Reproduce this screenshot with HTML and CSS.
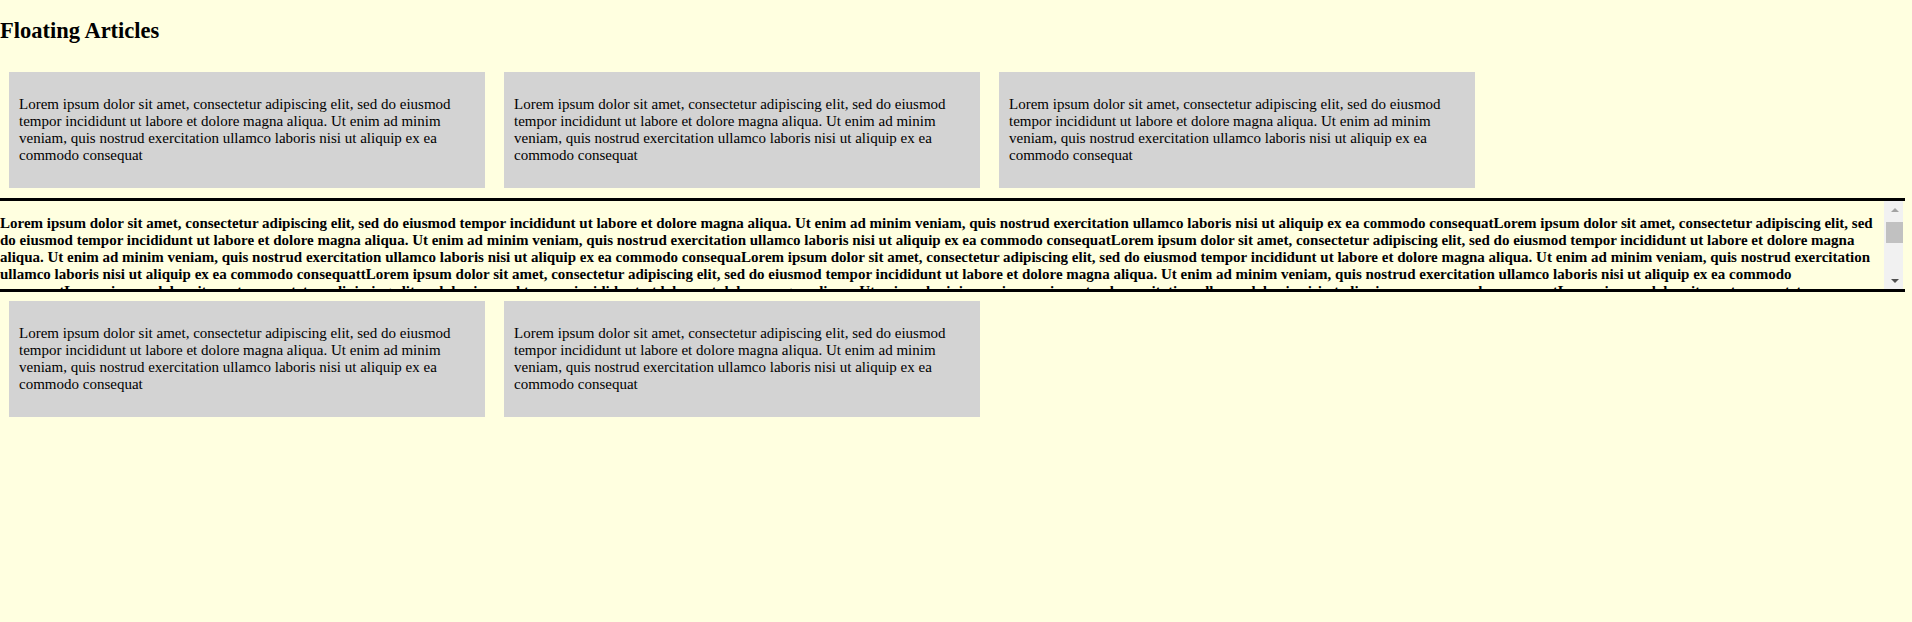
FILE: index.html
```html
<!DOCTYPE html>
<html lang="en">
<head>
<meta charset="utf-8">
<title>Floating Articles</title>
<link rel="stylesheet" href="styles.css">
</head>
<body>
<h2 class="title">Floating Articles</h2>
<div class="row">
  <article class="card"><p>Lorem ipsum dolor sit amet, consectetur adipiscing elit, sed do eiusmod tempor incididunt ut labore et dolore magna aliqua. Ut enim ad minim veniam, quis nostrud exercitation ullamco laboris nisi ut aliquip ex ea commodo consequat</p></article>
  <article class="card"><p>Lorem ipsum dolor sit amet, consectetur adipiscing elit, sed do eiusmod tempor incididunt ut labore et dolore magna aliqua. Ut enim ad minim veniam, quis nostrud exercitation ullamco laboris nisi ut aliquip ex ea commodo consequat</p></article>
  <article class="card"><p>Lorem ipsum dolor sit amet, consectetur adipiscing elit, sed do eiusmod tempor incididunt ut labore et dolore magna aliqua. Ut enim ad minim veniam, quis nostrud exercitation ullamco laboris nisi ut aliquip ex ea commodo consequat</p></article>
</div>
<section class="scroller">
  <div class="scroller-body">
    <p class="scroller-text">Lorem ipsum dolor sit amet, consectetur adipiscing elit, sed do eiusmod tempor incididunt ut labore et dolore magna aliqua. Ut enim ad minim veniam, quis nostrud exercitation ullamco laboris nisi ut aliquip ex ea commodo consequatLorem ipsum dolor sit amet, consectetur adipiscing elit, sed do eiusmod tempor incididunt ut labore et dolore magna aliqua. Ut enim ad minim veniam, quis nostrud exercitation ullamco laboris nisi ut aliquip ex ea commodo consequatLorem ipsum dolor sit amet, consectetur adipiscing elit, sed do eiusmod tempor incididunt ut labore et dolore magna aliqua. Ut enim ad minim veniam, quis nostrud exercitation ullamco laboris nisi ut aliquip ex ea commodo consequaLorem ipsum dolor sit amet, consectetur adipiscing elit, sed do eiusmod tempor incididunt ut labore et dolore magna aliqua. Ut enim ad minim veniam, quis nostrud exercitation ullamco laboris nisi ut aliquip ex ea commodo consequattLorem ipsum dolor sit amet, consectetur adipiscing elit, sed do eiusmod tempor incididunt ut labore et dolore magna aliqua. Ut enim ad minim veniam, quis nostrud exercitation ullamco laboris nisi ut aliquip ex ea commodo consequatLorem ipsum dolor sit amet, consectetur adipiscing elit, sed do eiusmod tempor incididunt ut labore et dolore magna aliqua. Ut enim ad minim veniam, quis nostrud exercitation ullamco laboris nisi ut aliquip ex ea commodo consequatLorem ipsum dolor sit amet, consectetur adipiscing elit, sed do eiusmod tempor incididunt ut labore et dolore magna aliqua. Ut enim ad minim veniam, quis nostrud exercitation ullamco laboris nisi ut aliquip ex ea commodo consequatLorem ipsum dolor sit amet, consectetur adipiscing elit, sed do eiusmod tempor incididunt ut labore et dolore magna aliqua. Ut enim ad minim veniam, quis nostrud exercitation ullamco laboris nisi ut aliquip ex ea commodo consequat</p>
  </div>
  <div class="scrollbar" aria-hidden="true">
    <div class="sb-btn"><span class="arrow-up"></span></div>
    <div class="sb-track"><div class="sb-thumb"></div></div>
    <div class="sb-btn"><span class="arrow-down"></span></div>
  </div>
</section>
<div class="row">
  <article class="card"><p>Lorem ipsum dolor sit amet, consectetur adipiscing elit, sed do eiusmod tempor incididunt ut labore et dolore magna aliqua. Ut enim ad minim veniam, quis nostrud exercitation ullamco laboris nisi ut aliquip ex ea commodo consequat</p></article>
  <article class="card"><p>Lorem ipsum dolor sit amet, consectetur adipiscing elit, sed do eiusmod tempor incididunt ut labore et dolore magna aliqua. Ut enim ad minim veniam, quis nostrud exercitation ullamco laboris nisi ut aliquip ex ea commodo consequat</p></article>
</div>
</body>
</html>
```
FILE: styles.css
```css
html, body {
  margin: 0;
  background: #ffffe0;
}
body {
  font-family: "Liberation Serif", "Times New Roman", serif;
  font-size: 15px;
  color: #000;
}
.title {
  font-size: 22.5px;
  font-weight: bold;
  margin: 18px 0 19px;
}
.row {
  display: flex;
  gap: 19px;
  padding: 9px 9px 10px;
}
.card {
  width: 476px;
  box-sizing: border-box;
  background: #d3d3d3;
  padding: 9px 10px;
}
.card p {
  margin: 15px 0;
}
.scroller {
  display: flex;
  width: 1905px;
  height: 94px;
  box-sizing: border-box;
  padding-right: 2px;
  border-top: 3px solid #000;
  border-bottom: 3px solid #000;
}
.scroller-body {
  flex: 1;
  min-width: 0;
  overflow: hidden;
}
.scroller-text {
  font-weight: bold;
  margin: 14px 0;
}
.scrollbar {
  width: 19px;
  flex: none;
  display: flex;
  flex-direction: column;
  background: #f1f1f1;
  box-sizing: border-box;
  padding-left: 2px;
}
.sb-btn {
  height: 17px;
  flex: none;
  display: flex;
  align-items: center;
  justify-content: center;
}
.arrow-up {
  width: 0;
  height: 0;
  border-left: 4px solid transparent;
  border-right: 4px solid transparent;
  border-bottom: 4px solid #a3a3a3;
}
.arrow-down {
  width: 0;
  height: 0;
  border-left: 4px solid transparent;
  border-right: 4px solid transparent;
  border-top: 4px solid #505050;
}
.sb-track {
  flex: 1;
  padding-top: 4px;
}
.sb-thumb {
  height: 21px;
  background: #c1c1c1;
}
```
